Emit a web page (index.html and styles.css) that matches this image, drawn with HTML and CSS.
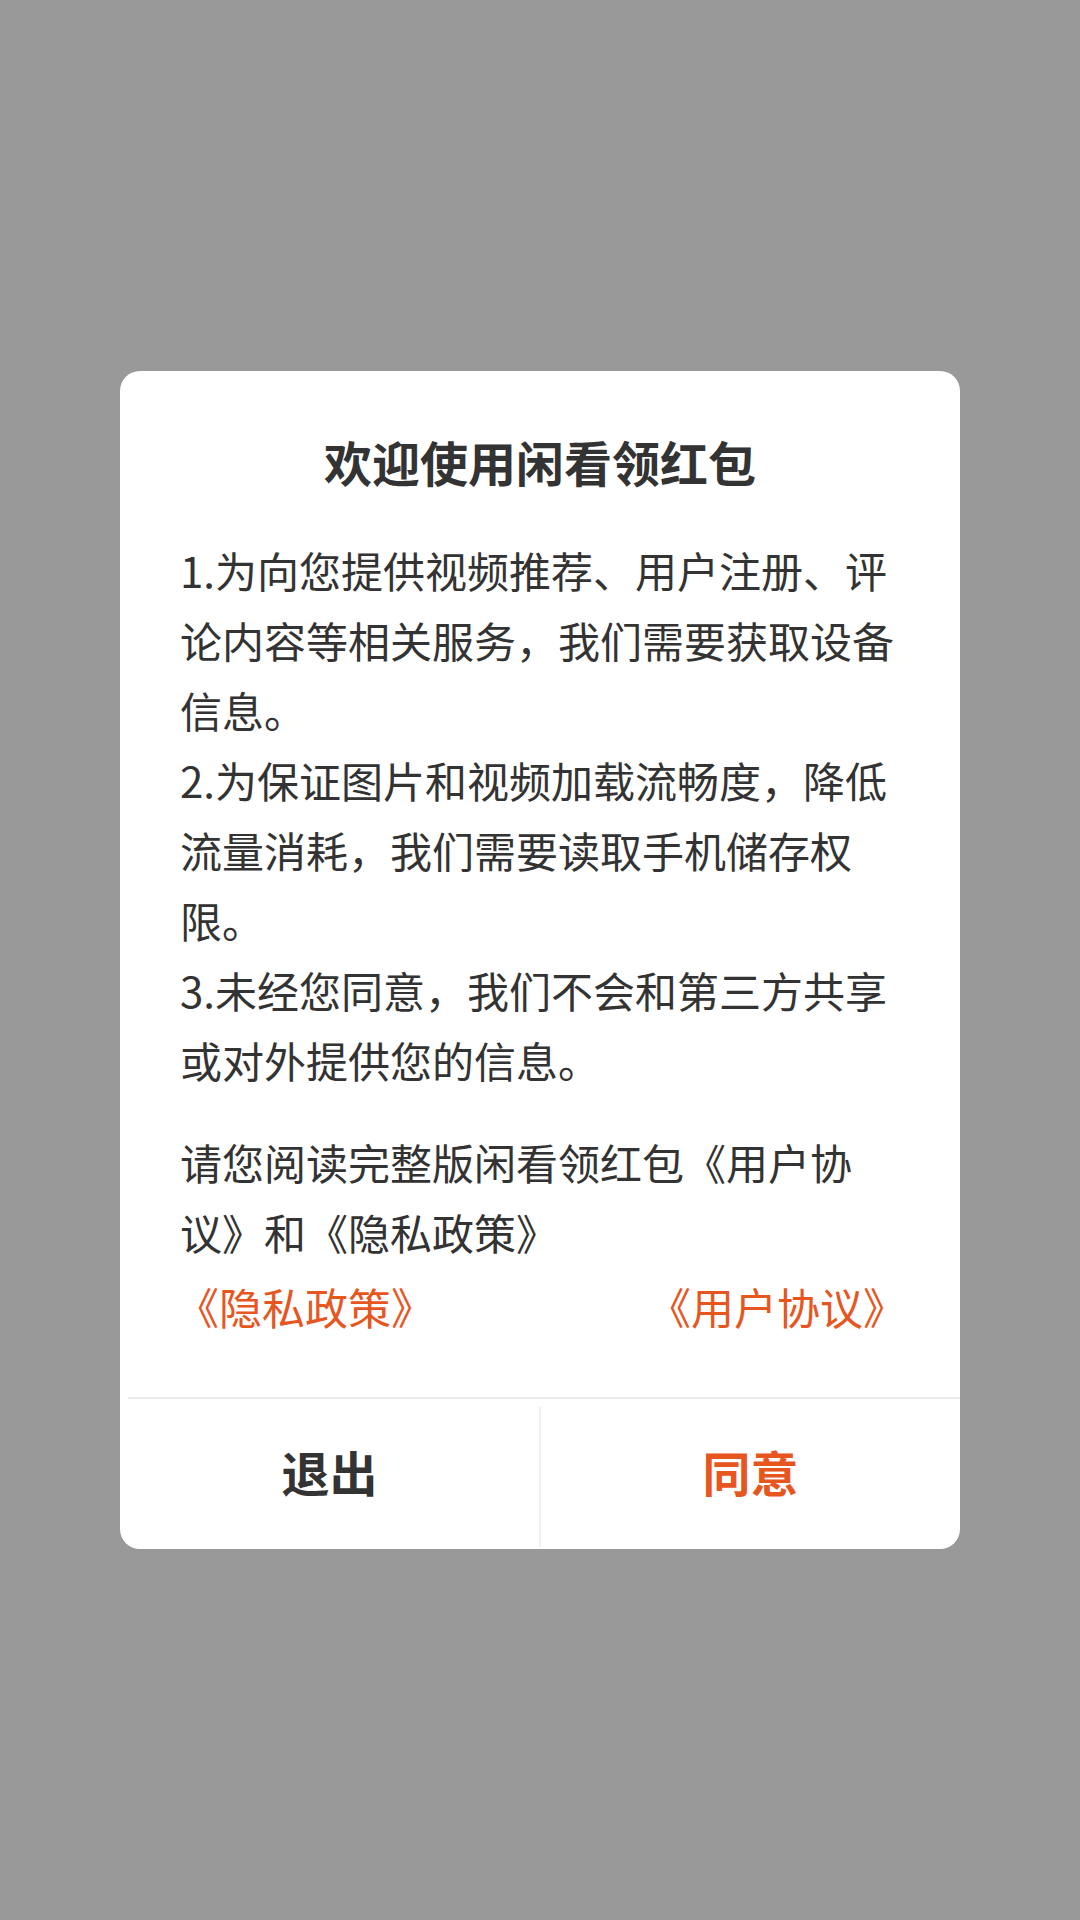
FILE: index.html
```html
<!DOCTYPE html>
<html lang="zh-CN">
<head>
<meta charset="utf-8">
<title>欢迎使用闲看领红包</title>
<link rel="stylesheet" href="styles.css">
</head>
<body>
<div class="overlay">
  <div class="dialog">
    <h1 class="title">欢迎使用闲看领红包</h1>
    <div class="content">
      <p class="terms">1.为向您提供视频推荐、用户注册、评论内容等相关服务，我们需要获取设备信息。<br>2.为保证图片和视频加载流畅度，降低流量消耗，我们需要读取手机储存权限。<br>3.未经您同意，我们不会和第三方共享或对外提供您的信息。</p>
      <p class="notice">请您阅读完整版闲看领红包《用户协议》和《隐私政策》</p>
      <div class="links">
        <span class="link">《隐私政策》</span>
        <span class="link">《用户协议》</span>
      </div>
    </div>
    <div class="actions">
      <div class="btn btn-exit">退出</div>
      <div class="btn btn-agree">同意</div>
    </div>
  </div>
</div>
</body>
</html>
```
FILE: styles.css
```css
html, body {
  margin: 0;
  padding: 0;
}
body {
  width: 1080px;
  height: 1920px;
  background: #999999;
  font-family: "Noto Sans CJK SC", "Noto Sans", sans-serif;
  color: #333333;
}
.overlay {
  height: 1920px;
  display: flex;
  align-items: center;
  justify-content: center;
}
.dialog {
  width: 840px;
  background: #ffffff;
  border-radius: 20px;
  overflow: hidden;
  display: flex;
  flex-direction: column;
}
.title {
  margin: 0;
  padding: 60px 0 0 0;
  font-size: 48px;
  line-height: 60px;
  font-weight: 700;
  text-align: center;
  color: #333333;
}
.content {
  padding: 44px 60px 66px 60px;
}
.terms,
.notice {
  margin: 0;
  font-size: 42px;
  line-height: 70px;
  color: #333333;
}
.notice {
  margin-top: 32px;
}
.links {
  margin-top: 14px;
  margin-right: -6px;
  margin-left: -4px;
  display: flex;
  justify-content: space-between;
  font-size: 43px;
  line-height: 50px;
  color: #e8561f;
}
.actions {
  margin-left: 8px;
  border-top: 2px solid #ebebeb;
  display: flex;
  height: 150px;
}
.btn {
  flex: 1;
  display: flex;
  align-items: center;
  justify-content: center;
  font-size: 48px;
  font-weight: 700;
  padding-bottom: 6px;
}
.btn-exit {
  color: #333333;
  margin-left: -8px;
}
.btn-agree {
  color: #e8561f;
  border-left: 2px solid #f0f0f0;
  margin: 8px 0 2px 0;
  padding-bottom: 12px;
}
```
